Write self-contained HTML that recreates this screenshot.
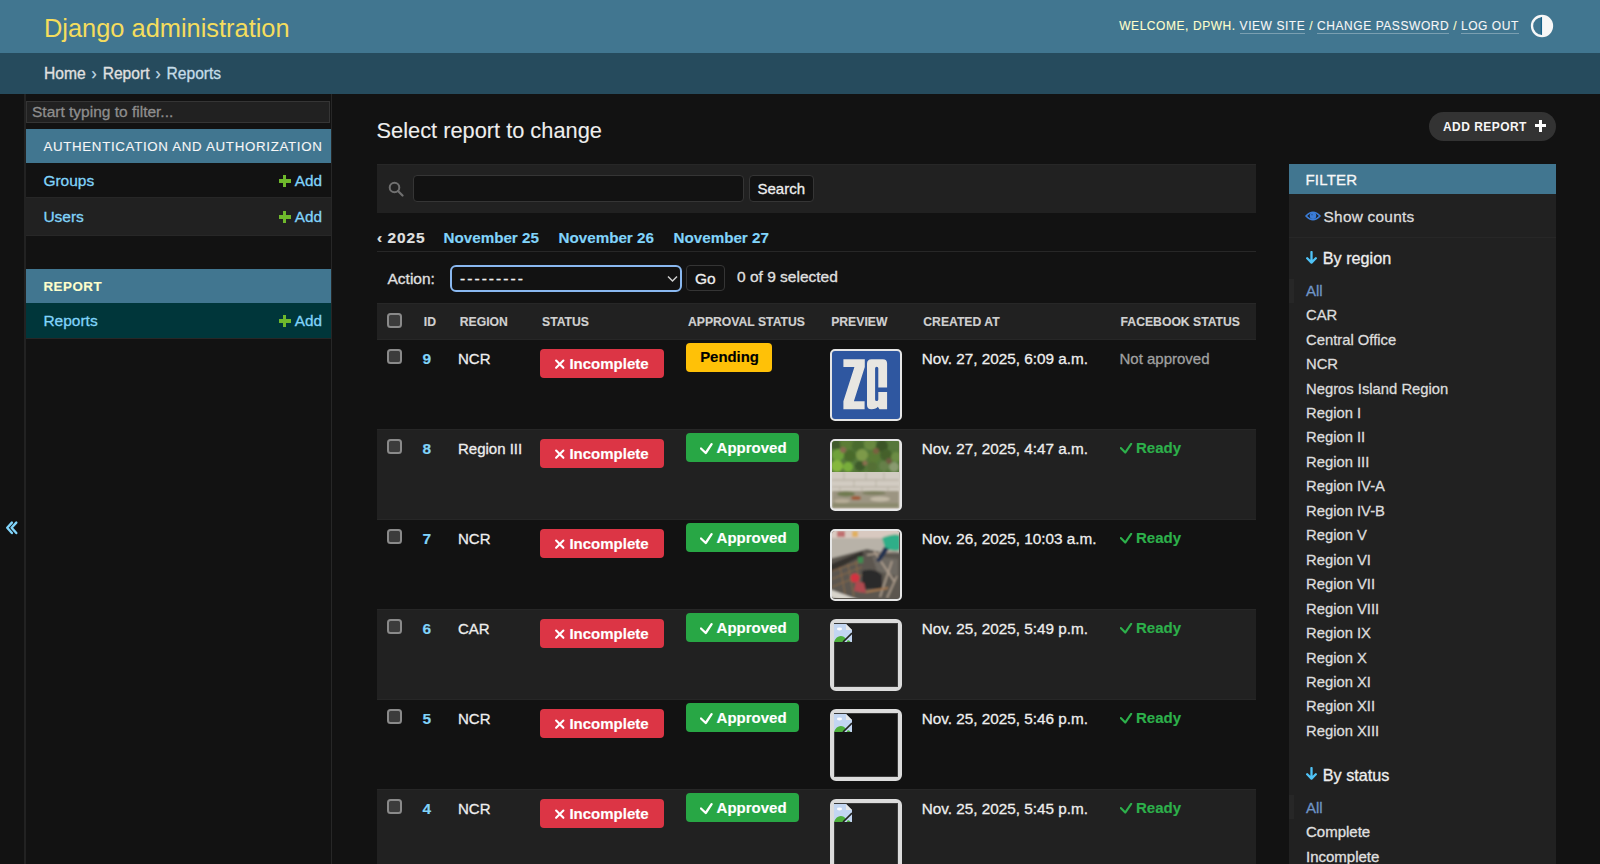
<!DOCTYPE html>
<html><head><meta charset="utf-8"><title>Select report to change | Django site admin</title>
<style>
html,body{margin:0;padding:0;background:#121212;width:1600px;height:864px;overflow:hidden;}
body{font-family:"Liberation Sans",sans-serif;position:relative;}
.a{position:absolute;}
.t{white-space:nowrap;-webkit-text-stroke:0.3px currentColor;}
.ul{border-bottom:1px solid rgba(255,255,255,0.3);padding-bottom:0px;}
</style></head><body>
<div class="a" style="left:0px;top:0px;width:1600px;height:53px;background:#417690;"></div>
<div class="a t " style="left:44.00px;top:15.80px;font-size:25.4px;line-height:25.4px;color:#f5dd5d;-webkit-text-stroke:0;">Django administration</div>
<div class="a t " style="left:1119.20px;top:20.14px;font-size:12.0px;line-height:12.0px;color:#f7f7f7;letter-spacing:0.56px;-webkit-text-stroke:0.1px currentColor;"><span style="color:#ffffcc">WELCOME, DPWH. </span><span class="ul">VIEW SITE</span> <span style="color:#ffffcc">/</span> <span class="ul">CHANGE PASSWORD</span> <span style="color:#ffffcc">/</span> <span class="ul">LOG OUT</span></div>
<svg class="a" style="left:1530.3px;top:14.4px" width="24" height="24" viewBox="0 0 24 24"><circle cx="12" cy="12" r="10" fill="none" stroke="#f7f7f7" stroke-width="2.3"/><path d="M12 2 A10 10 0 0 1 12 22 Z" fill="#f7f7f7"/><line x1="11.4" y1="3.2" x2="11.4" y2="20.8" stroke="#16628a" stroke-width="1.3"/></svg>
<div class="a" style="left:0px;top:53px;width:1600px;height:41px;background:#264b5d;"></div>
<div class="a t " style="left:44.00px;top:66.19px;font-size:15.6px;line-height:15.6px;color:#c4dce8;word-spacing:1.6px;"><span style="color:#e0e0e0">Home</span> › <span style="color:#e0e0e0">Report</span> › Reports</div>
<div class="a" style="left:0px;top:94px;width:24px;height:770px;background:#121212;"></div>
<div class="a" style="left:24px;top:94px;width:2px;height:770px;background:#222222;"></div>
<svg class="a" style="left:0px;top:515px" width="22" height="26" viewBox="0 0 22 26"><path d="M11.9 7.6 L7.2 12.8 L11.9 18" fill="none" stroke="#81d4fa" stroke-width="2.4" stroke-linecap="round" stroke-linejoin="round"/><path d="M16.3 7.6 L11.6 12.8 L16.3 18" fill="none" stroke="#81d4fa" stroke-width="2.4" stroke-linecap="round" stroke-linejoin="round"/></svg>
<div class="a" style="left:331px;top:94px;width:1px;height:770px;background:#272727;"></div>
<div class="a" style="left:26px;top:101px;width:304px;height:22px;background:#212121;border:1px solid #353535;box-sizing:border-box;"></div>
<div class="a t " style="left:32.00px;top:104.18px;font-size:15.5px;line-height:15.5px;color:#8e8e8e;">Start typing to filter...</div>
<div class="a" style="left:26px;top:129px;width:305px;height:34px;background:#417690;"></div>
<div class="a t " style="left:43.40px;top:139.64px;font-size:13.3px;line-height:13.3px;color:#f7f7f7;letter-spacing:0.68px;-webkit-text-stroke:0.1px currentColor;">AUTHENTICATION AND AUTHORIZATION</div>
<div class="a" style="left:26px;top:163px;width:305px;height:34px;background:#121212;"></div>
<div class="a" style="left:26px;top:197px;width:305px;height:1px;background:#272727;"></div>
<div class="a t " style="left:43.40px;top:172.98px;font-size:15.5px;line-height:15.5px;color:#81d4fa;">Groups</div>
<div class="a" style="left:26px;top:198px;width:305px;height:37px;background:#212121;"></div>
<div class="a" style="left:26px;top:235px;width:305px;height:1px;background:#272727;"></div>
<div class="a t " style="left:43.40px;top:208.88px;font-size:15.5px;line-height:15.5px;color:#81d4fa;">Users</div>
<div class="a t " style="left:294.80px;top:173.15px;font-size:15.3px;line-height:15.3px;color:#81d4fa;">Add</div>
<div class="a" style="left:279px;top:175.29999999999998px;width:11.6px;height:11.6px;"><div class="a" style="left:4.1px;top:0;width:3.4px;height:11.6px;background:#6fb82c"></div><div class="a" style="left:0;top:4.1px;width:11.6px;height:3.4px;background:#6fb82c"></div></div>
<div class="a t " style="left:294.80px;top:209.05px;font-size:15.3px;line-height:15.3px;color:#81d4fa;">Add</div>
<div class="a" style="left:279px;top:211.2px;width:11.6px;height:11.6px;"><div class="a" style="left:4.1px;top:0;width:3.4px;height:11.6px;background:#6fb82c"></div><div class="a" style="left:0;top:4.1px;width:11.6px;height:3.4px;background:#6fb82c"></div></div>
<div class="a" style="left:26px;top:269px;width:305px;height:34px;background:#417690;"></div>
<div class="a t " style="left:43.40px;top:280.14px;font-size:13.3px;line-height:13.3px;color:#ffffcc;font-weight:700;-webkit-text-stroke:0.15px currentColor;letter-spacing:0.55px;">REPORT</div>
<div class="a" style="left:26px;top:303px;width:305px;height:35px;background:#00363a;"></div>
<div class="a" style="left:26px;top:338px;width:305px;height:1px;background:#272727;"></div>
<div class="a t " style="left:43.40px;top:312.88px;font-size:15.5px;line-height:15.5px;color:#81d4fa;">Reports</div>
<div class="a t " style="left:294.80px;top:313.05px;font-size:15.3px;line-height:15.3px;color:#81d4fa;">Add</div>
<div class="a" style="left:279px;top:315.2px;width:11.6px;height:11.6px;"><div class="a" style="left:4.1px;top:0;width:3.4px;height:11.6px;background:#6fb82c"></div><div class="a" style="left:0;top:4.1px;width:11.6px;height:3.4px;background:#6fb82c"></div></div>
<div class="a t " style="left:376.50px;top:119.75px;font-size:21.8px;line-height:21.8px;color:#eeeeee;-webkit-text-stroke:0.1px currentColor;">Select report to change</div>
<div class="a" style="left:1429px;top:112px;width:127px;height:29px;border-radius:15px;background:#333333"></div>
<div class="a t " style="left:1443.00px;top:121.34px;font-size:12.0px;line-height:12.0px;color:#f7f7f7;font-weight:700;-webkit-text-stroke:0.15px currentColor;letter-spacing:0.45px;-webkit-text-stroke:0;">ADD REPORT</div>
<div class="a" style="left:1534.8px;top:120px;width:11.5px;height:11.5px;"><div class="a" style="left:4.25px;top:0;width:3px;height:11.5px;background:#fff"></div><div class="a" style="left:0;top:4.25px;width:11.5px;height:3px;background:#fff"></div></div>
<div class="a" style="left:377px;top:164px;width:879px;height:48.5px;background:#212121;"></div>
<div class="a" style="left:377px;top:164px;width:879px;height:1px;background:#272727;"></div>
<svg class="a" style="left:388px;top:181px" width="16" height="16" viewBox="0 0 16 16"><circle cx="6.5" cy="6.5" r="4.8" fill="none" stroke="#707070" stroke-width="2"/><line x1="10" y1="10" x2="14.5" y2="14.5" stroke="#707070" stroke-width="2.2" stroke-linecap="round"/></svg>
<div class="a" style="left:413px;top:174.5px;width:330.5px;height:27px;box-sizing:border-box;border:1px solid #353535;border-radius:4px;background:#121212"></div>
<div class="a" style="left:748.5px;top:174.5px;width:65.5px;height:27.5px;box-sizing:border-box;border:1px solid #353535;border-radius:4px;background:#121212"></div>
<div class="a t " style="left:757.50px;top:181.00px;font-size:15.0px;line-height:15.0px;color:#eeeeee;">Search</div>
<div class="a t " style="left:377.00px;top:229.78px;font-size:15.5px;line-height:15.5px;color:#e0e0e0;font-weight:700;-webkit-text-stroke:0.15px currentColor;">‹</div>
<div class="a t " style="left:387.50px;top:229.78px;font-size:15.5px;line-height:15.5px;color:#e0e0e0;font-weight:700;-webkit-text-stroke:0.15px currentColor;letter-spacing:0.9px;">2025</div>
<div class="a t " style="left:443.50px;top:230.03px;font-size:15.2px;line-height:15.2px;color:#81d4fa;font-weight:700;-webkit-text-stroke:0.15px currentColor;">November 25</div>
<div class="a t " style="left:558.50px;top:230.03px;font-size:15.2px;line-height:15.2px;color:#81d4fa;font-weight:700;-webkit-text-stroke:0.15px currentColor;">November 26</div>
<div class="a t " style="left:673.50px;top:230.03px;font-size:15.2px;line-height:15.2px;color:#81d4fa;font-weight:700;-webkit-text-stroke:0.15px currentColor;">November 27</div>
<div class="a" style="left:377px;top:251px;width:879px;height:1px;background:#272727;"></div>
<div class="a t " style="left:387.50px;top:270.88px;font-size:15.5px;line-height:15.5px;color:#e0e0e0;">Action:</div>
<div class="a" style="left:450px;top:265px;width:231.5px;height:26.5px;box-sizing:border-box;border:2px solid #8ab8f0;border-radius:6px;background:#121212"></div>
<div class="a t " style="left:460.00px;top:270.88px;font-size:15.5px;line-height:15.5px;color:#eeeeee;letter-spacing:2.05px;">---------</div>
<svg class="a" style="left:666.5px;top:274.5px" width="11" height="8" viewBox="0 0 11 8"><path d="M1 1.5 L5.5 6 L10 1.5" fill="none" stroke="#d0d0d0" stroke-width="1.5"/></svg>
<div class="a" style="left:685.5px;top:265px;width:39px;height:26px;box-sizing:border-box;border:1px solid #353535;border-radius:4px;background:#121212"></div>
<div class="a t " style="left:695.00px;top:271.38px;font-size:15.5px;line-height:15.5px;color:#eeeeee;">Go</div>
<div class="a t " style="left:737.00px;top:269.08px;font-size:15.5px;line-height:15.5px;color:#e0e0e0;">0 of 9 selected</div>
<div class="a" style="left:377px;top:303px;width:879px;height:36px;background:#212121;"></div>
<div class="a" style="left:377px;top:303px;width:879px;height:1px;background:#272727;"></div>
<div class="a" style="left:387.3px;top:312.5px;width:15px;height:15px;box-sizing:border-box;border:2px solid #8a8a8a;border-radius:3.5px;background:#3c3c3c"></div>
<div class="a t " style="left:423.80px;top:315.67px;font-size:12.2px;line-height:12.2px;color:#d0d0d0;font-weight:700;-webkit-text-stroke:0.15px currentColor;">ID</div>
<div class="a t " style="left:459.80px;top:315.67px;font-size:12.2px;line-height:12.2px;color:#d0d0d0;font-weight:700;-webkit-text-stroke:0.15px currentColor;">REGION</div>
<div class="a t " style="left:542.00px;top:315.67px;font-size:12.2px;line-height:12.2px;color:#d0d0d0;font-weight:700;-webkit-text-stroke:0.15px currentColor;">STATUS</div>
<div class="a t " style="left:688.00px;top:315.67px;font-size:12.2px;line-height:12.2px;color:#d0d0d0;font-weight:700;-webkit-text-stroke:0.15px currentColor;">APPROVAL STATUS</div>
<div class="a t " style="left:831.20px;top:315.67px;font-size:12.2px;line-height:12.2px;color:#d0d0d0;font-weight:700;-webkit-text-stroke:0.15px currentColor;">PREVIEW</div>
<div class="a t " style="left:923.30px;top:315.67px;font-size:12.2px;line-height:12.2px;color:#d0d0d0;font-weight:700;-webkit-text-stroke:0.15px currentColor;">CREATED AT</div>
<div class="a t " style="left:1120.60px;top:315.67px;font-size:12.2px;line-height:12.2px;color:#d0d0d0;font-weight:700;-webkit-text-stroke:0.15px currentColor;">FACEBOOK STATUS</div>
<div class="a" style="left:377px;top:339.0px;width:879px;height:90px;background:#121212;"></div>
<div class="a" style="left:377px;top:339.0px;width:879px;height:1px;background:#272727;"></div>
<div class="a" style="left:387.3px;top:348.5px;width:15px;height:15px;box-sizing:border-box;border:2px solid #8a8a8a;border-radius:3.5px;background:#3c3c3c"></div>
<div class="a t " style="left:422.50px;top:350.88px;font-size:15.5px;line-height:15.5px;color:#81d4fa;font-weight:700;-webkit-text-stroke:0.15px currentColor;">9</div>
<div class="a t " style="left:458.00px;top:350.60px;font-size:15.0px;line-height:15.0px;color:#eeeeee;">NCR</div>
<div class="a" style="left:540px;top:349.0px;width:123.5px;height:29px;border-radius:4px;background:#dc3545"></div>
<svg class="a" style="left:553px;top:357.5px" width="14" height="13" viewBox="0 0 14 13"><path d="M3.1 2.5 L10.4 9.8 M10.4 2.5 L3.1 9.8" stroke="#fff" stroke-width="2.1" stroke-linecap="round"/></svg>
<div class="a t " style="left:569.40px;top:356.40px;font-size:15.0px;line-height:15.0px;color:#ffffff;font-weight:700;-webkit-text-stroke:0.15px currentColor;">Incomplete</div>
<div class="a" style="left:685.75px;top:343.0px;width:86.5px;height:28.5px;border-radius:4px;background:#ffc107"></div>
<div class="a t " style="left:700.20px;top:350.49px;font-size:14.9px;line-height:14.9px;color:#000000;font-weight:700;-webkit-text-stroke:0.15px currentColor;">Pending</div>
<div class="a" style="left:829.5px;top:348.5px;width:72px;height:72px;box-sizing:border-box;border:2.5px solid #e6e6e6;border-radius:5px;background:#2f57a0;overflow:hidden"><svg class="a" style="left:-1.8px;top:-1.6px" width="72" height="72" viewBox="0 0 72 72"><path d="M13.4 10.2 H34.8 V17.9 L23.9 52.3 H34.6 V60.2 H13.4 V52.3 L24.4 17.9 H13.4 Z" fill="#e8e6e1"/><path d="M41.5 10.2 H52.8 Q57.1 10.2 57.1 14.5 V38.4 H48.3 V19.3 Q48.3 17.7 46.7 17.7 Q45.1 17.7 45.1 19.3 V50.4 Q45.1 52 46.7 52 Q48.3 52 48.3 50.4 V43.1 H57.1 V60.2 H49.5 L47.8 57.8 Q46.5 60.2 41.5 60.2 Q37 60.2 37 56 V14.7 Q37 10.2 41.5 10.2 Z" fill="#e8e6e1"/></svg></div>
<div class="a t " style="left:921.70px;top:350.55px;font-size:15.3px;line-height:15.3px;color:#eeeeee;">Nov. 27, 2025, 6:09 a.m.</div>
<div class="a t " style="left:1119.50px;top:351.30px;font-size:15.0px;line-height:15.0px;color:#a0a0a0;">Not approved</div>
<div class="a" style="left:377px;top:429.0px;width:879px;height:90px;background:#212121;"></div>
<div class="a" style="left:377px;top:429.0px;width:879px;height:1px;background:#272727;"></div>
<div class="a" style="left:387.3px;top:438.5px;width:15px;height:15px;box-sizing:border-box;border:2px solid #8a8a8a;border-radius:3.5px;background:#3c3c3c"></div>
<div class="a t " style="left:422.50px;top:440.88px;font-size:15.5px;line-height:15.5px;color:#81d4fa;font-weight:700;-webkit-text-stroke:0.15px currentColor;">8</div>
<div class="a t " style="left:458.00px;top:440.60px;font-size:15.0px;line-height:15.0px;color:#eeeeee;">Region III</div>
<div class="a" style="left:540px;top:439.0px;width:123.5px;height:29px;border-radius:4px;background:#dc3545"></div>
<svg class="a" style="left:553px;top:447.5px" width="14" height="13" viewBox="0 0 14 13"><path d="M3.1 2.5 L10.4 9.8 M10.4 2.5 L3.1 9.8" stroke="#fff" stroke-width="2.1" stroke-linecap="round"/></svg>
<div class="a t " style="left:569.40px;top:446.40px;font-size:15.0px;line-height:15.0px;color:#ffffff;font-weight:700;-webkit-text-stroke:0.15px currentColor;">Incomplete</div>
<div class="a" style="left:685.75px;top:433.0px;width:113.5px;height:28.5px;border-radius:4px;background:#28a745"></div>
<svg class="a" style="left:700px;top:442.5px" width="13" height="12" viewBox="0 0 13 12"><path d="M1 5.5 L5.75 10 L11.6 1.2" fill="none" stroke="#fff" stroke-width="2.3" stroke-linecap="round" stroke-linejoin="round"/></svg>
<div class="a t " style="left:716.60px;top:440.20px;font-size:15.0px;line-height:15.0px;color:#ffffff;font-weight:700;-webkit-text-stroke:0.15px currentColor;">Approved</div>
<div class="a" style="left:829.5px;top:438.5px;width:72px;height:72px;box-sizing:border-box;border:2.5px solid #e6e6e6;border-radius:5px;overflow:hidden;background:#cfc9bf"><svg class="a" style="left:0;top:0" width="67" height="67" viewBox="0 0 67 67"><defs><filter id="bl1" x="-10%" y="-10%" width="120%" height="120%"><feGaussianBlur stdDeviation="0.9"/></filter></defs><rect x="0" y="0" width="67" height="32" fill="#55783a"/><g filter="url(#bl1)"><circle cx="4" cy="4" r="5" fill="#3f5a2a"/><circle cx="14" cy="3" r="6" fill="#5b7d35"/><circle cx="26" cy="5" r="6" fill="#496b2e"/><circle cx="38" cy="3" r="6" fill="#6a8a40"/><circle cx="50" cy="5" r="6" fill="#3b5526"/><circle cx="62" cy="4" r="6" fill="#56773a"/><circle cx="6" cy="14" r="6" fill="#6fa23a"/><circle cx="18" cy="15" r="6" fill="#4a6a2c"/><circle cx="30" cy="14" r="6" fill="#7d9a4a"/><circle cx="42" cy="16" r="6" fill="#5a7a34"/><circle cx="54" cy="14" r="6" fill="#44602c"/><circle cx="64" cy="16" r="5" fill="#6c8c44"/><circle cx="5" cy="25" r="6" fill="#86b83e"/><circle cx="16" cy="26" r="5" fill="#78ad3a"/><circle cx="28" cy="25" r="5" fill="#3e5a2a"/><circle cx="40" cy="26" r="5" fill="#556f36"/><circle cx="52" cy="25" r="5" fill="#66804a"/><circle cx="62" cy="26" r="5" fill="#8a9a70"/><circle cx="11" cy="9" r="3" fill="#8a6a50"/><circle cx="44" cy="10" r="3" fill="#7a6040"/><circle cx="57" cy="20" r="3" fill="#6e5a40"/><circle cx="33" cy="22" r="2.5" fill="#8a7050"/></g><rect x="0" y="31" width="67" height="20" fill="#d2ccc2"/><g filter="url(#bl1)"><path d="M0 39 H67 M0 46 H67" stroke="#aaa396" stroke-width="0.9"/><path d="M12 31 V39 M34 31 V39 M52 31 V39 M22 39 V46 M44 39 V46 M8 46 V51 M30 46 V51 M56 46 V51" stroke="#b5ae9f" stroke-width="0.8"/><rect x="0" y="50" width="67" height="17" fill="#9c9582"/><ellipse cx="14" cy="53" rx="9" ry="2.5" fill="#6f7a50"/><ellipse cx="42" cy="52" rx="12" ry="2" fill="#7e8060"/><ellipse cx="24" cy="57" rx="5" ry="2" fill="#a05a38"/><ellipse cx="48" cy="58" rx="10" ry="2.5" fill="#c2b9a6"/><ellipse cx="10" cy="60" rx="8" ry="2" fill="#b8ae98"/><rect x="0" y="62" width="67" height="5" fill="#8c8a6e"/></g></svg></div>
<div class="a t " style="left:921.70px;top:440.55px;font-size:15.3px;line-height:15.3px;color:#eeeeee;">Nov. 27, 2025, 4:47 a.m.</div>
<svg class="a" style="left:1119.5px;top:443.0px" width="13" height="12" viewBox="0 0 13 12"><path d="M0.8 5 L5.25 9.6 L11.2 0.8" fill="none" stroke="#2db04b" stroke-width="2.1" stroke-linecap="round" stroke-linejoin="round"/></svg>
<div class="a t " style="left:1136.00px;top:440.20px;font-size:15.0px;line-height:15.0px;color:#2db04b;font-weight:700;-webkit-text-stroke:0.15px currentColor;">Ready</div>
<div class="a" style="left:377px;top:519.0px;width:879px;height:90px;background:#121212;"></div>
<div class="a" style="left:377px;top:519.0px;width:879px;height:1px;background:#272727;"></div>
<div class="a" style="left:387.3px;top:528.5px;width:15px;height:15px;box-sizing:border-box;border:2px solid #8a8a8a;border-radius:3.5px;background:#3c3c3c"></div>
<div class="a t " style="left:422.50px;top:530.88px;font-size:15.5px;line-height:15.5px;color:#81d4fa;font-weight:700;-webkit-text-stroke:0.15px currentColor;">7</div>
<div class="a t " style="left:458.00px;top:530.60px;font-size:15.0px;line-height:15.0px;color:#eeeeee;">NCR</div>
<div class="a" style="left:540px;top:529.0px;width:123.5px;height:29px;border-radius:4px;background:#dc3545"></div>
<svg class="a" style="left:553px;top:537.5px" width="14" height="13" viewBox="0 0 14 13"><path d="M3.1 2.5 L10.4 9.8 M10.4 2.5 L3.1 9.8" stroke="#fff" stroke-width="2.1" stroke-linecap="round"/></svg>
<div class="a t " style="left:569.40px;top:536.40px;font-size:15.0px;line-height:15.0px;color:#ffffff;font-weight:700;-webkit-text-stroke:0.15px currentColor;">Incomplete</div>
<div class="a" style="left:685.75px;top:523.0px;width:113.5px;height:28.5px;border-radius:4px;background:#28a745"></div>
<svg class="a" style="left:700px;top:532.5px" width="13" height="12" viewBox="0 0 13 12"><path d="M1 5.5 L5.75 10 L11.6 1.2" fill="none" stroke="#fff" stroke-width="2.3" stroke-linecap="round" stroke-linejoin="round"/></svg>
<div class="a t " style="left:716.60px;top:530.20px;font-size:15.0px;line-height:15.0px;color:#ffffff;font-weight:700;-webkit-text-stroke:0.15px currentColor;">Approved</div>
<div class="a" style="left:829.5px;top:528.5px;width:72px;height:72px;box-sizing:border-box;border:2.5px solid #e6e6e6;border-radius:5px;overflow:hidden;background:#5a5650"><svg class="a" style="left:0;top:0" width="67" height="67" viewBox="0 0 67 67"><defs><filter id="bl2"><feGaussianBlur stdDeviation="0.9"/></filter></defs><g filter="url(#bl2)"><rect x="-3" y="-3" width="73" height="10" fill="#d8c9c0"/><rect x="5" y="0" width="8" height="6" fill="#c07070"/><rect x="20" y="0" width="6" height="6" fill="#e0b060"/><path d="M-3 7 H70 V22 L30 20 L-3 30 Z" fill="#b8b2a8"/><path d="M-3 28 L35 18 L70 26 V70 H-3 Z" fill="#5c5750"/><path d="M-3 34 L30 20 L32 24 L-3 42 Z" fill="#34312d"/><path d="M40 25 L66 28 V45 L45 40 Z" fill="#6e6962"/><path d="M30 40 Q42 36 50 44 V58 H30 Z" fill="#2a2a2a"/><path d="M0 40 L30 30 M0 48 L30 36 M0 56 L30 44 M8 36 L14 68 M16 33 L22 66 M24 30 L28 62" stroke="#8a6a4a" stroke-width="1"/><path d="M35 24 L65 20 M42 20 L62 50 M60 30 L48 66 M65 45 L55 67" stroke="#b0a090" stroke-width="1.6"/><path d="M-3 58 L30 70 L20 72 L-3 66 Z" fill="#d8d4cc"/><path d="M50 7 Q60 2 68 4 V19 Q60 21 53 17 Z" fill="#2fae88"/><path d="M52 16 L44 30 L48 31 L57 18 Z" fill="#223050"/><circle cx="23" cy="47" r="4.5" fill="#d43040"/><path d="M24 50 L32 52 L34 62 L22 60 Z" fill="#b04a50"/><path d="M34 60 L56 56 L56 58 L34 62 Z" fill="#a87a50"/><rect x="26" y="26" width="5" height="6" fill="#3c8a50"/></g></svg></div>
<div class="a t " style="left:921.70px;top:530.55px;font-size:15.3px;line-height:15.3px;color:#eeeeee;">Nov. 26, 2025, 10:03 a.m.</div>
<svg class="a" style="left:1119.5px;top:533.0px" width="13" height="12" viewBox="0 0 13 12"><path d="M0.8 5 L5.25 9.6 L11.2 0.8" fill="none" stroke="#2db04b" stroke-width="2.1" stroke-linecap="round" stroke-linejoin="round"/></svg>
<div class="a t " style="left:1136.00px;top:530.20px;font-size:15.0px;line-height:15.0px;color:#2db04b;font-weight:700;-webkit-text-stroke:0.15px currentColor;">Ready</div>
<div class="a" style="left:377px;top:609.0px;width:879px;height:90px;background:#212121;"></div>
<div class="a" style="left:377px;top:609.0px;width:879px;height:1px;background:#272727;"></div>
<div class="a" style="left:387.3px;top:618.5px;width:15px;height:15px;box-sizing:border-box;border:2px solid #8a8a8a;border-radius:3.5px;background:#3c3c3c"></div>
<div class="a t " style="left:422.50px;top:620.88px;font-size:15.5px;line-height:15.5px;color:#81d4fa;font-weight:700;-webkit-text-stroke:0.15px currentColor;">6</div>
<div class="a t " style="left:458.00px;top:620.60px;font-size:15.0px;line-height:15.0px;color:#eeeeee;">CAR</div>
<div class="a" style="left:540px;top:619.0px;width:123.5px;height:29px;border-radius:4px;background:#dc3545"></div>
<svg class="a" style="left:553px;top:627.5px" width="14" height="13" viewBox="0 0 14 13"><path d="M3.1 2.5 L10.4 9.8 M10.4 2.5 L3.1 9.8" stroke="#fff" stroke-width="2.1" stroke-linecap="round"/></svg>
<div class="a t " style="left:569.40px;top:626.40px;font-size:15.0px;line-height:15.0px;color:#ffffff;font-weight:700;-webkit-text-stroke:0.15px currentColor;">Incomplete</div>
<div class="a" style="left:685.75px;top:613.0px;width:113.5px;height:28.5px;border-radius:4px;background:#28a745"></div>
<svg class="a" style="left:700px;top:622.5px" width="13" height="12" viewBox="0 0 13 12"><path d="M1 5.5 L5.75 10 L11.6 1.2" fill="none" stroke="#fff" stroke-width="2.3" stroke-linecap="round" stroke-linejoin="round"/></svg>
<div class="a t " style="left:716.60px;top:620.20px;font-size:15.0px;line-height:15.0px;color:#ffffff;font-weight:700;-webkit-text-stroke:0.15px currentColor;">Approved</div>
<div class="a" style="left:829.5px;top:618.5px;width:72px;height:72px;box-sizing:border-box;border:4px solid #dcdcdc;border-radius:6px;background:transparent"><div class="a" style="left:0;top:0;width:64px;height:64px;box-sizing:border-box;border:1px solid #3c3c3c"></div><svg class="a" style="left:0.5px;top:1px" width="18" height="18" viewBox="0 0 18 18"><path d="M0 0 H12 L18 6 V18 H0 Z" fill="#c3d6f2"/><path d="M12 0 L18 6 H12 Z" fill="#e8e8e8"/><ellipse cx="5.5" cy="5" rx="2.6" ry="1.4" fill="#fff"/><path d="M0 18 C2 11 9 10 12 15 L10 18 Z" fill="#4caf3c"/><path d="M12.5 18 L14 16 C15 16.5 16 17 16.5 18 Z" fill="#4caf3c"/><path d="M9 18 L18 9" stroke="#222" stroke-width="1.6"/></svg></div>
<div class="a t " style="left:921.70px;top:620.55px;font-size:15.3px;line-height:15.3px;color:#eeeeee;">Nov. 25, 2025, 5:49 p.m.</div>
<svg class="a" style="left:1119.5px;top:623.0px" width="13" height="12" viewBox="0 0 13 12"><path d="M0.8 5 L5.25 9.6 L11.2 0.8" fill="none" stroke="#2db04b" stroke-width="2.1" stroke-linecap="round" stroke-linejoin="round"/></svg>
<div class="a t " style="left:1136.00px;top:620.20px;font-size:15.0px;line-height:15.0px;color:#2db04b;font-weight:700;-webkit-text-stroke:0.15px currentColor;">Ready</div>
<div class="a" style="left:377px;top:699.0px;width:879px;height:90px;background:#121212;"></div>
<div class="a" style="left:377px;top:699.0px;width:879px;height:1px;background:#272727;"></div>
<div class="a" style="left:387.3px;top:708.5px;width:15px;height:15px;box-sizing:border-box;border:2px solid #8a8a8a;border-radius:3.5px;background:#3c3c3c"></div>
<div class="a t " style="left:422.50px;top:710.88px;font-size:15.5px;line-height:15.5px;color:#81d4fa;font-weight:700;-webkit-text-stroke:0.15px currentColor;">5</div>
<div class="a t " style="left:458.00px;top:710.60px;font-size:15.0px;line-height:15.0px;color:#eeeeee;">NCR</div>
<div class="a" style="left:540px;top:709.0px;width:123.5px;height:29px;border-radius:4px;background:#dc3545"></div>
<svg class="a" style="left:553px;top:717.5px" width="14" height="13" viewBox="0 0 14 13"><path d="M3.1 2.5 L10.4 9.8 M10.4 2.5 L3.1 9.8" stroke="#fff" stroke-width="2.1" stroke-linecap="round"/></svg>
<div class="a t " style="left:569.40px;top:716.40px;font-size:15.0px;line-height:15.0px;color:#ffffff;font-weight:700;-webkit-text-stroke:0.15px currentColor;">Incomplete</div>
<div class="a" style="left:685.75px;top:703.0px;width:113.5px;height:28.5px;border-radius:4px;background:#28a745"></div>
<svg class="a" style="left:700px;top:712.5px" width="13" height="12" viewBox="0 0 13 12"><path d="M1 5.5 L5.75 10 L11.6 1.2" fill="none" stroke="#fff" stroke-width="2.3" stroke-linecap="round" stroke-linejoin="round"/></svg>
<div class="a t " style="left:716.60px;top:710.20px;font-size:15.0px;line-height:15.0px;color:#ffffff;font-weight:700;-webkit-text-stroke:0.15px currentColor;">Approved</div>
<div class="a" style="left:829.5px;top:708.5px;width:72px;height:72px;box-sizing:border-box;border:4px solid #dcdcdc;border-radius:6px;background:transparent"><div class="a" style="left:0;top:0;width:64px;height:64px;box-sizing:border-box;border:1px solid #3c3c3c"></div><svg class="a" style="left:0.5px;top:1px" width="18" height="18" viewBox="0 0 18 18"><path d="M0 0 H12 L18 6 V18 H0 Z" fill="#c3d6f2"/><path d="M12 0 L18 6 H12 Z" fill="#e8e8e8"/><ellipse cx="5.5" cy="5" rx="2.6" ry="1.4" fill="#fff"/><path d="M0 18 C2 11 9 10 12 15 L10 18 Z" fill="#4caf3c"/><path d="M12.5 18 L14 16 C15 16.5 16 17 16.5 18 Z" fill="#4caf3c"/><path d="M9 18 L18 9" stroke="#222" stroke-width="1.6"/></svg></div>
<div class="a t " style="left:921.70px;top:710.55px;font-size:15.3px;line-height:15.3px;color:#eeeeee;">Nov. 25, 2025, 5:46 p.m.</div>
<svg class="a" style="left:1119.5px;top:713.0px" width="13" height="12" viewBox="0 0 13 12"><path d="M0.8 5 L5.25 9.6 L11.2 0.8" fill="none" stroke="#2db04b" stroke-width="2.1" stroke-linecap="round" stroke-linejoin="round"/></svg>
<div class="a t " style="left:1136.00px;top:710.20px;font-size:15.0px;line-height:15.0px;color:#2db04b;font-weight:700;-webkit-text-stroke:0.15px currentColor;">Ready</div>
<div class="a" style="left:377px;top:789.0px;width:879px;height:90px;background:#212121;"></div>
<div class="a" style="left:377px;top:789.0px;width:879px;height:1px;background:#272727;"></div>
<div class="a" style="left:387.3px;top:798.5px;width:15px;height:15px;box-sizing:border-box;border:2px solid #8a8a8a;border-radius:3.5px;background:#3c3c3c"></div>
<div class="a t " style="left:422.50px;top:800.88px;font-size:15.5px;line-height:15.5px;color:#81d4fa;font-weight:700;-webkit-text-stroke:0.15px currentColor;">4</div>
<div class="a t " style="left:458.00px;top:800.60px;font-size:15.0px;line-height:15.0px;color:#eeeeee;">NCR</div>
<div class="a" style="left:540px;top:799.0px;width:123.5px;height:29px;border-radius:4px;background:#dc3545"></div>
<svg class="a" style="left:553px;top:807.5px" width="14" height="13" viewBox="0 0 14 13"><path d="M3.1 2.5 L10.4 9.8 M10.4 2.5 L3.1 9.8" stroke="#fff" stroke-width="2.1" stroke-linecap="round"/></svg>
<div class="a t " style="left:569.40px;top:806.40px;font-size:15.0px;line-height:15.0px;color:#ffffff;font-weight:700;-webkit-text-stroke:0.15px currentColor;">Incomplete</div>
<div class="a" style="left:685.75px;top:793.0px;width:113.5px;height:28.5px;border-radius:4px;background:#28a745"></div>
<svg class="a" style="left:700px;top:802.5px" width="13" height="12" viewBox="0 0 13 12"><path d="M1 5.5 L5.75 10 L11.6 1.2" fill="none" stroke="#fff" stroke-width="2.3" stroke-linecap="round" stroke-linejoin="round"/></svg>
<div class="a t " style="left:716.60px;top:800.20px;font-size:15.0px;line-height:15.0px;color:#ffffff;font-weight:700;-webkit-text-stroke:0.15px currentColor;">Approved</div>
<div class="a" style="left:829.5px;top:798.5px;width:72px;height:72px;box-sizing:border-box;border:4px solid #dcdcdc;border-radius:6px;background:transparent"><div class="a" style="left:0;top:0;width:64px;height:64px;box-sizing:border-box;border:1px solid #3c3c3c"></div><svg class="a" style="left:0.5px;top:1px" width="18" height="18" viewBox="0 0 18 18"><path d="M0 0 H12 L18 6 V18 H0 Z" fill="#c3d6f2"/><path d="M12 0 L18 6 H12 Z" fill="#e8e8e8"/><ellipse cx="5.5" cy="5" rx="2.6" ry="1.4" fill="#fff"/><path d="M0 18 C2 11 9 10 12 15 L10 18 Z" fill="#4caf3c"/><path d="M12.5 18 L14 16 C15 16.5 16 17 16.5 18 Z" fill="#4caf3c"/><path d="M9 18 L18 9" stroke="#222" stroke-width="1.6"/></svg></div>
<div class="a t " style="left:921.70px;top:800.55px;font-size:15.3px;line-height:15.3px;color:#eeeeee;">Nov. 25, 2025, 5:45 p.m.</div>
<svg class="a" style="left:1119.5px;top:803.0px" width="13" height="12" viewBox="0 0 13 12"><path d="M0.8 5 L5.25 9.6 L11.2 0.8" fill="none" stroke="#2db04b" stroke-width="2.1" stroke-linecap="round" stroke-linejoin="round"/></svg>
<div class="a t " style="left:1136.00px;top:800.20px;font-size:15.0px;line-height:15.0px;color:#2db04b;font-weight:700;-webkit-text-stroke:0.15px currentColor;">Ready</div>
<div class="a" style="left:1289px;top:164px;width:267px;height:700px;background:#212121;"></div>
<div class="a" style="left:1289px;top:164px;width:267px;height:30px;background:#417690;"></div>
<div class="a t " style="left:1305.50px;top:172.30px;font-size:15.0px;line-height:15.0px;color:#f7f7f7;letter-spacing:0.2px;">FILTER</div>
<svg class="a" style="left:1305px;top:210px" width="16" height="12" viewBox="0 0 16 12"><path d="M1 6 Q8 -1.5 15 6 Q8 13.5 1 6 Z" fill="none" stroke="#3b7dd8" stroke-width="1.6"/><circle cx="8" cy="5.8" r="3.3" fill="#3b7dd8"/><circle cx="7" cy="4.6" r="0.9" fill="#2a5fa8"/></svg>
<div class="a t " style="left:1323.60px;top:208.96px;font-size:15.4px;line-height:15.4px;color:#dddddd;letter-spacing:0.25px;">Show counts</div>
<div class="a" style="left:1289px;top:236.5px;width:267px;height:1px;background:#272727;"></div>
<svg class="a" style="left:1306px;top:251px" width="11" height="13" viewBox="0 0 11 13"><path d="M5.5 1 V11.5 M1.2 7.3 L5.5 11.6 L9.8 7.3" fill="none" stroke="#4fc3f7" stroke-width="2.3" stroke-linecap="round" stroke-linejoin="round"/></svg>
<div class="a t " style="left:1322.80px;top:250.29px;font-size:16.2px;line-height:16.2px;color:#eeeeee;">By region</div>
<div class="a" style="left:1289px;top:278.5px;width:5px;height:24px;background:#272727;"></div>
<div class="a t " style="left:1306.00px;top:283.00px;font-size:15.0px;line-height:15.0px;color:#6f94c6;">All</div>
<div class="a t " style="left:1306.00px;top:308.13px;font-size:14.8px;line-height:14.8px;color:#dcdcdc;">CAR</div>
<div class="a t " style="left:1306.00px;top:332.59px;font-size:14.8px;line-height:14.8px;color:#dcdcdc;">Central Office</div>
<div class="a t " style="left:1306.00px;top:357.05px;font-size:14.8px;line-height:14.8px;color:#dcdcdc;">NCR</div>
<div class="a t " style="left:1306.00px;top:381.51px;font-size:14.8px;line-height:14.8px;color:#dcdcdc;">Negros Island Region</div>
<div class="a t " style="left:1306.00px;top:405.97px;font-size:14.8px;line-height:14.8px;color:#dcdcdc;">Region I</div>
<div class="a t " style="left:1306.00px;top:430.43px;font-size:14.8px;line-height:14.8px;color:#dcdcdc;">Region II</div>
<div class="a t " style="left:1306.00px;top:454.89px;font-size:14.8px;line-height:14.8px;color:#dcdcdc;">Region III</div>
<div class="a t " style="left:1306.00px;top:479.35px;font-size:14.8px;line-height:14.8px;color:#dcdcdc;">Region IV-A</div>
<div class="a t " style="left:1306.00px;top:503.81px;font-size:14.8px;line-height:14.8px;color:#dcdcdc;">Region IV-B</div>
<div class="a t " style="left:1306.00px;top:528.27px;font-size:14.8px;line-height:14.8px;color:#dcdcdc;">Region V</div>
<div class="a t " style="left:1306.00px;top:552.73px;font-size:14.8px;line-height:14.8px;color:#dcdcdc;">Region VI</div>
<div class="a t " style="left:1306.00px;top:577.19px;font-size:14.8px;line-height:14.8px;color:#dcdcdc;">Region VII</div>
<div class="a t " style="left:1306.00px;top:601.65px;font-size:14.8px;line-height:14.8px;color:#dcdcdc;">Region VIII</div>
<div class="a t " style="left:1306.00px;top:626.11px;font-size:14.8px;line-height:14.8px;color:#dcdcdc;">Region IX</div>
<div class="a t " style="left:1306.00px;top:650.57px;font-size:14.8px;line-height:14.8px;color:#dcdcdc;">Region X</div>
<div class="a t " style="left:1306.00px;top:675.03px;font-size:14.8px;line-height:14.8px;color:#dcdcdc;">Region XI</div>
<div class="a t " style="left:1306.00px;top:699.49px;font-size:14.8px;line-height:14.8px;color:#dcdcdc;">Region XII</div>
<div class="a t " style="left:1306.00px;top:723.95px;font-size:14.8px;line-height:14.8px;color:#dcdcdc;">Region XIII</div>
<svg class="a" style="left:1306px;top:767px" width="11" height="13" viewBox="0 0 11 13"><path d="M5.5 1 V11.5 M1.2 7.3 L5.5 11.6 L9.8 7.3" fill="none" stroke="#4fc3f7" stroke-width="2.3" stroke-linecap="round" stroke-linejoin="round"/></svg>
<div class="a t " style="left:1322.80px;top:766.59px;font-size:16.2px;line-height:16.2px;color:#eeeeee;">By status</div>
<div class="a" style="left:1289px;top:795px;width:5px;height:24px;background:#272727;"></div>
<div class="a t " style="left:1306.00px;top:799.50px;font-size:15.0px;line-height:15.0px;color:#6f94c6;">All</div>
<div class="a t " style="left:1306.00px;top:824.00px;font-size:15.0px;line-height:15.0px;color:#e0e0e0;">Complete</div>
<div class="a t " style="left:1306.00px;top:848.50px;font-size:15.0px;line-height:15.0px;color:#e0e0e0;">Incomplete</div>
</body></html>
